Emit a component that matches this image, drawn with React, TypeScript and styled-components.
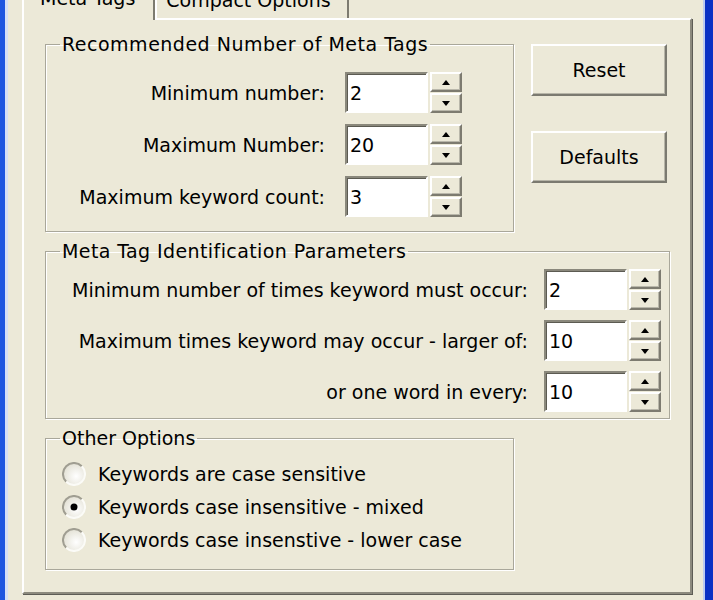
import styled, { createGlobalStyle } from "styled-components";

const GlobalStyle = createGlobalStyle`
  html, body {
    margin: 0;
    padding: 0;
    background: #0a33c6;
  }
  body {
    font-family: "DejaVu Sans", Verdana, sans-serif;
  }
`;

// window frame: blue edges either side of the client area
const Window = styled.div`
  box-sizing: border-box;
  display: flex;
  width: 713px;
  height: 600px;
  overflow: hidden;
  border-left: 5px solid #1f56e0;
  border-right: 8px solid #0a31c4;
`;

const Client = styled.div`
  flex: 1;
  min-width: 0;
  display: flex;
  flex-direction: column;
  background: #ece9d8;
  border-left: 3px solid #d6e0f7;
  border-right: 2px solid #bccbf0;
  padding: 0 11px 6px 14px;
`;

const TabStrip = styled.div`
  display: flex;
  align-items: flex-end;
  height: 18px;
  flex: none;
`;

const Tab = styled.div<{ $active?: boolean }>`
  position: relative;
  z-index: 1;
  display: flex;
  align-items: flex-end;
  box-sizing: border-box;
  height: ${(p) => (p.$active ? 38 : 34)}px;
  margin-bottom: ${(p) => (p.$active ? -2 : 0)}px;
  padding: ${(p) => (p.$active ? "0 18px 12px 16px" : "0 16px 8px 9px")};
  background: #ece9d8;
  border: 2px solid;
  border-color: #fff #7d7b70 transparent #fff;
  border-bottom: none;
  border-radius: 3px 3px 0 0;
  font-size: 19px;
  line-height: 20px;
  color: #000;
  white-space: nowrap;
`;

const Panel = styled.div`
  flex: 1;
  display: grid;
  grid-template-columns: 469px 139px;
  column-gap: 17px;
  row-gap: 9px;
  align-content: start;
  padding: 14px 20px 0 21px;
  border: 2px solid;
  border-color: #fff #8c8a7e #8c8a7e #fff;
  box-shadow: 1px 1px 0 #5d5c55;
`;

const Group = styled.fieldset<{ $inset: string; $wide?: boolean }>`
  margin: 0;
  min-width: 0;
  padding: ${(p) => p.$inset};
  border: 1px solid #a9a79a;
  box-shadow: inset 1px 1px 0 #fff, 1px 1px 0 #fff;
  ${(p) => (p.$wide ? "grid-column: 1 / -1;" : "")}
  display: flex;
  flex-direction: column;
`;

const Legend = styled.legend<{ $spread?: number }>`
  padding: 0 2px;
  font-size: 19px;
  line-height: 20px;
  letter-spacing: ${(p) => p.$spread ?? 0}px;
  color: #000;
`;

const Rows = styled.div<{ $gap: number }>`
  display: flex;
  flex-direction: column;
  gap: ${(p) => p.$gap}px;
`;

const FieldRow = styled.div`
  display: flex;
  align-items: center;
  justify-content: flex-end;
`;

const Label = styled.span<{ $gap: number }>`
  margin-right: ${(p) => p.$gap}px;
  font-size: 19px;
  line-height: 20px;
  color: #000;
  white-space: nowrap;
`;

const NumberBox = styled.input`
  box-sizing: border-box;
  width: 83px;
  height: 41px;
  margin: 0;
  padding: 0 0 0 3px;
  border: 2px solid;
  border-color: #8a887c #fff #fff #8a887c;
  box-shadow: inset 1px 1px 0 #5c5b52;
  background: #fff;
  font-family: "DejaVu Sans", Verdana, sans-serif;
  font-size: 19px;
  color: #000;
  outline: none;
`;

const Spinner = styled.div`
  display: flex;
  flex-direction: column;
  gap: 1px;
  margin-left: 2px;
`;

const SpinButton = styled.button`
  display: flex;
  align-items: center;
  justify-content: center;
  box-sizing: border-box;
  width: 32px;
  height: 20px;
  padding: 0;
  background: #ece9d8;
  border: 2px solid;
  border-color: #fff #7d7b70 #7d7b70 #fff;
  box-shadow: inset -1px -1px 0 #b9b7aa;
`;

const ButtonColumn = styled.div`
  display: flex;
  flex-direction: column;
  align-items: flex-start;
  gap: 35px;
  padding-top: 10px;
`;

const PushButton = styled.button`
  box-sizing: border-box;
  width: 136px;
  height: 52px;
  background: #ece9d8;
  border: 2px solid;
  border-color: #fff #7b7a70 #7b7a70 #fff;
  box-shadow: inset -1px -1px 0 #b7b5a8;
  font-family: "DejaVu Sans", Verdana, sans-serif;
  font-size: 19px;
  color: #000;
`;

const RadioRow = styled.label`
  display: flex;
  align-items: center;
  gap: 12px;
  height: 26px;
  margin-left: 2px;
  font-size: 19px;
  line-height: 20px;
  color: #000;
  white-space: nowrap;
`;

function Arrow({ dir }: { dir: "up" | "down" }) {
  return (
    <svg width="8" height="5" viewBox="0 0 8 5">
      <polygon points={dir === "up" ? "4,0 8,5 0,5" : "0,0 8,0 4,5"} fill="#000" />
    </svg>
  );
}

function SpinField({ label, value, gap }: { label: string; value: string; gap: number }) {
  return (
    <FieldRow>
      <Label $gap={gap}>{label}</Label>
      <NumberBox defaultValue={value} />
      <Spinner>
        <SpinButton>
          <Arrow dir="up" />
        </SpinButton>
        <SpinButton>
          <Arrow dir="down" />
        </SpinButton>
      </Spinner>
    </FieldRow>
  );
}

function RadioDot({ checked }: { checked?: boolean }) {
  return (
    <svg width="24" height="24" viewBox="0 0 24 24">
      <defs>
        <radialGradient id="radioFace" cx="0.6" cy="0.6" r="0.6">
          <stop offset="0" stopColor="#ffffff" />
          <stop offset="1" stopColor="#e4e2d6" />
        </radialGradient>
      </defs>
      <circle cx="12" cy="12" r="11" fill="url(#radioFace)" />
      <path d="M4.2 19.8 A11 11 0 0 1 19.8 4.2" fill="none" stroke="#a09e92" strokeWidth="2" />
      <path d="M19.8 4.2 A11 11 0 0 1 4.2 19.8" fill="none" stroke="#fbfbf7" strokeWidth="2" />
      {checked && <circle cx="12" cy="12" r="3.5" fill="#000" />}
    </svg>
  );
}

export default function App() {
  return (
    <>
      <GlobalStyle />
      <Window>
        <Client>
          <TabStrip>
            <Tab $active>Meta Tags</Tab>
            <Tab>Compact Options</Tab>
          </TabStrip>
          <Panel>
            <Group $inset="18px 51px 14px 14px">
              <Legend $spread={0.5}>Recommended Number of Meta Tags</Legend>
              <Rows $gap={11}>
                <SpinField label="Minimum number:" value="2" gap={20} />
                <SpinField label="Maximum Number:" value="20" gap={20} />
                <SpinField label="Maximum keyword count:" value="3" gap={20} />
              </Rows>
            </Group>
            <ButtonColumn>
              <PushButton>Reset</PushButton>
              <PushButton>Defaults</PushButton>
            </ButtonColumn>
            <Group $wide $inset="8px 8px 6px 14px">
              <Legend $spread={0.4}>Meta Tag Identification Parameters</Legend>
              <Rows $gap={10}>
                <SpinField label="Minimum number of times keyword must occur:" value="2" gap={16} />
                <SpinField label="Maximum times keyword may occur - larger of:" value="10" gap={16} />
                <SpinField label="or one word in every:" value="10" gap={16} />
              </Rows>
            </Group>
            <Group $inset="13px 14px 16px 14px">
              <Legend>Other Options</Legend>
              <Rows $gap={7}>
                <RadioRow>
                  <RadioDot />
                  Keywords are case sensitive
                </RadioRow>
                <RadioRow>
                  <RadioDot checked />
                  Keywords case insensitive - mixed
                </RadioRow>
                <RadioRow>
                  <RadioDot />
                  Keywords case insenstive - lower case
                </RadioRow>
              </Rows>
            </Group>
          </Panel>
        </Client>
      </Window>
    </>
  );
}
